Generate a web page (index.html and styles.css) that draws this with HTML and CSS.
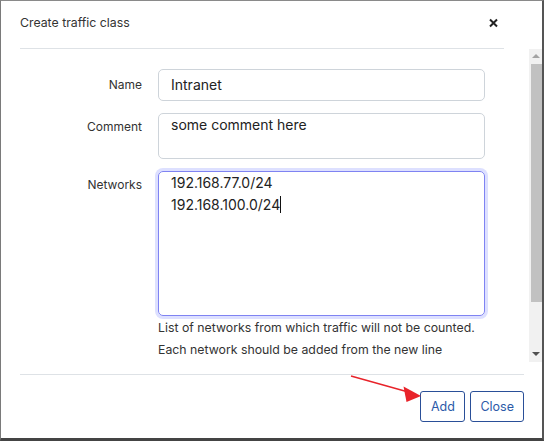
FILE: index.html
```html
<!DOCTYPE html>
<html>
<head>
<meta charset="utf-8">
<link rel="stylesheet" href="styles.css">
</head>
<body>
<div class="window">
  <div class="header">
    <span class="title">Create traffic class</span>
    <svg class="close-x" width="9" height="10" viewBox="0 0 9 10"><path d="M1 1.5 L8 8.5 M8 1.5 L1 8.5" stroke="#222" stroke-width="2" stroke-linecap="butt"/></svg>
  </div>
  <div class="body">
    <div class="content">
      <div class="form">
        <label class="lbl lbl-mid">Name</label>
        <div class="field input">Intranet</div>
        <label class="lbl">Comment</label>
        <div class="field comment">some comment here</div>
        <label class="lbl">Networks</label>
        <div class="net-wrap">
          <div class="field networks focus">
            <div>192.168.77.0/24</div>
            <div>192.168.100.0/24<span class="caret"></span></div>
          </div>
          <div class="help">List of networks from which traffic will not be counted.<br>Each network should be added from the new line</div>
        </div>
      </div>
    </div>
    <div class="scrollbar">
      <div class="arrow up"></div>
      <div class="thumb"></div>
      <div class="track-rest"></div>
      <div class="arrow down"></div>
    </div>
  </div>
  <div class="footer">
    <button class="btn btn-add">Add</button>
    <button class="btn">Close</button>
  </div>
  <svg class="pointer" width="544" height="441" viewBox="0 0 544 441">
    <line x1="351" y1="376" x2="410" y2="392.5" stroke="#e8232a" stroke-width="1.4"/>
    <polygon points="421,396 403.5,386.5 406.5,402" fill="#e8232a"/>
  </svg>
</div>
</body>
</html>
```
FILE: styles.css
```css
html, body {
  margin: 0;
  padding: 0;
  background: #fff;
}
body {
  font-family: Inter, "Noto Sans", sans-serif;
  color: #333;
}
.window {
  position: relative;
  width: 544px;
  height: 441px;
  box-sizing: border-box;
  border-left: 1px solid #7a7a7a;
  border-top: 1px solid #8a8a8a;
  border-right: 2px solid #555;
  border-bottom: 3px solid #444;
  display: flex;
  flex-direction: column;
  background: #fff;
}
.header {
  margin: 0 38px 0 19px;
  padding: 0 6px 4px 0;
  box-sizing: border-box;
  border-bottom: 1px solid #dee2e6;
  height: 48px;
  display: flex;
  align-items: center;
  justify-content: space-between;
}
.title {
  font-size: 12.3px;
  color: #333;
}
.close-x {
  display: block;
}
.body {
  height: 313px;
  display: flex;
}
.content {
  flex: 1;
  padding-top: 20px;
}
.form {
  display: grid;
  grid-template-columns: 141px 327px;
  column-gap: 16px;
  row-gap: 12px;
}
.lbl {
  font-size: 12px;
  text-align: right;
  line-height: 16px;
  padding-top: 6px;
  color: #333;
}
.lbl-mid {
  padding-top: 8px;
}
.field {
  box-sizing: border-box;
  border: 1px solid #ced4da;
  border-radius: 5px;
  padding: 0 12px;
  font-size: 14px;
  color: #222;
}
.input {
  height: 32px;
  line-height: 30px;
}
.comment {
  height: 46px;
  line-height: 22px;
}
.networks {
  height: 145px;
  line-height: 22px;
}
.focus {
  border-color: #7f83f2;
  box-shadow: 0 0 0 3px #dde0ff;
}
.caret {
  display: inline-block;
  width: 1px;
  height: 17px;
  background: #111;
  vertical-align: -3px;
}
.help {
  font-size: 12.3px;
  line-height: 22px;
  color: #333;
  padding-top: 1px;
}
.scrollbar {
  width: 13px;
  background: #f1f1f1;
  display: flex;
  flex-direction: column;
  align-items: flex-end;
}
.arrow {
  width: 0;
  height: 0;
  border-left: 4px solid transparent;
  border-right: 4px solid transparent;
  margin-right: 2px;
}
.arrow.up {
  border-bottom: 4px solid #a3a3a3;
  margin-top: 5px;
  margin-bottom: 6px;
}
.arrow.down {
  border-top: 4px solid #505050;
  margin-bottom: 6px;
}
.thumb {
  width: 11px;
  height: 238px;
  background: #c1c1c1;
}
.track-rest {
  flex: 1;
}
.footer {
  margin: 12px 18px 0 19px;
  border-top: 1px solid #dee2e6;
  padding-top: 16px;
  display: flex;
  justify-content: flex-end;
  gap: 5px;
}
.btn {
  height: 31px;
  padding: 0 9px;
  background: #fff;
  border: 1px solid #2a4f98;
  border-radius: 3px;
  color: #2c5aa8;
  font-family: Inter, "Noto Sans", sans-serif;
  font-size: 12.5px;
}
.btn-add {
  min-width: 45px;
}
.pointer {
  position: absolute;
  left: -1px;
  top: -1px;
  pointer-events: none;
}
```
